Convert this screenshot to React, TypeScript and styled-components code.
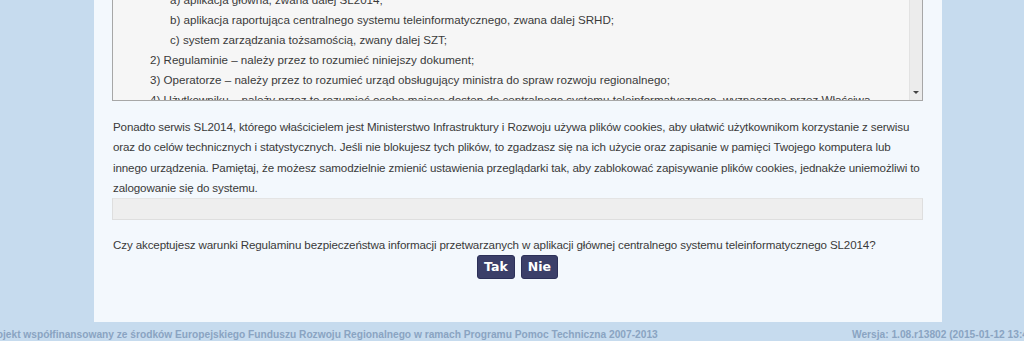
import styled, { createGlobalStyle } from 'styled-components';

const GlobalStyle = createGlobalStyle`
  html, body {
    margin: 0;
    padding: 0;
    background: #c6dbee;
    overflow: hidden;
  }
  body {
    font-family: Tahoma, "Liberation Sans", "DejaVu Sans", sans-serif;
    color: #3a3a3a;
  }
`;

const Page = styled.div`
  width: 1100px;
  margin-left: -14px;
  display: flex;
  flex-direction: column;
`;

const Panel = styled.div`
  margin: -49px 0 0 108px;
  width: 848px;
  box-sizing: border-box;
  background: #f3f8fd;
  padding: 18px 19px 43px 18px;
  display: flex;
  flex-direction: column;
`;

const ScrollBox = styled.div`
  display: flex;
  height: 130px;
  border: 1px solid #a7a7a7;
  background: #f6f6f6;
`;

const ScrollContent = styled.div`
  flex: 1;
  overflow: hidden;
  padding: 0 0 0 37px;
  font-size: 11.6px;
  line-height: 20px;
`;

const Line = styled.div<{ $level: number }>`
  white-space: nowrap;
  padding-left: ${(p) => p.$level * 20}px;
`;

const Scrollbar = styled.div`
  width: 12px;
  border-left: 1px solid #e2e2e2;
  background: #ececec;
  display: flex;
  flex-direction: column;
  justify-content: flex-end;
  align-items: center;
`;

const Arrow = styled.div`
  width: 0;
  height: 0;
  border-left: 3px solid transparent;
  border-right: 3px solid transparent;
  border-top: 3px solid #444;
  margin-bottom: 6px;
`;

const Paragraph = styled.p`
  margin: 16px 0 0 1px;
  font-size: 11.6px;
  letter-spacing: -0.13px;
  line-height: 20.4px;
`;

const Bar = styled.div`
  height: 20px;
  margin-top: -1px;
  background: #eeeeee;
  border: 1px solid #dedede;
  border-top-color: #e4e4e4;
`;

const Question = styled.p`
  margin: 15px 0 0 1px;
  font-size: 11.6px;
  letter-spacing: -0.13px;
  line-height: 20px;
`;

const Buttons = styled.div`
  display: flex;
  justify-content: center;
  gap: 6px;
`;

const Button = styled.button`
  height: 24px;
  padding: 0 6px;
  border: 1px solid #2c3058;
  border-radius: 3px;
  background: #3b3f69;
  color: #ffffff;
  font-family: Tahoma, "DejaVu Sans", sans-serif;
  font-weight: bold;
  font-size: 12.5px;
  cursor: pointer;
`;

const Footer = styled.div`
  display: flex;
  justify-content: space-between;
  padding: 6px 0 0 0;
  font-size: 10.2px;
  line-height: 13px;
  font-weight: bold;
  color: #8aa4c2;
  white-space: nowrap;
`;

const FooterRight = styled.span`
  margin-right: 49px;
`;

const lines: [number, string][] = [
  [0, '1) Systemie – należy przez to rozumieć centralny system teleinformatyczny, na który składają się:'],
  [1, 'a) aplikacja główna, zwana dalej SL2014;'],
  [1, 'b) aplikacja raportująca centralnego systemu teleinformatycznego, zwana dalej SRHD;'],
  [1, 'c) system zarządzania tożsamością, zwany dalej SZT;'],
  [0, '2) Regulaminie – należy przez to rozumieć niniejszy dokument;'],
  [0, '3) Operatorze – należy przez to rozumieć urząd obsługujący ministra do spraw rozwoju regionalnego;'],
  [0, '4) Użytkowniku – należy przez to rozumieć osobę mającą dostęp do centralnego systemu teleinformatycznego, wyznaczoną przez Właściwa'],
];

export default function App() {
  return (
    <>
      <GlobalStyle />
      <Page>
        <Panel>
          <ScrollBox>
            <ScrollContent>
              {lines.map(([level, text], i) => (
                <Line key={i} $level={level}>
                  {text}
                </Line>
              ))}
            </ScrollContent>
            <Scrollbar>
              <Arrow />
            </Scrollbar>
          </ScrollBox>
          <Paragraph>
            Ponadto serwis SL2014, którego właścicielem jest Ministerstwo Infrastruktury i Rozwoju używa plików cookies, aby ułatwić użytkownikom korzystanie z serwisu oraz do celów technicznych i statystycznych. Jeśli nie blokujesz tych plików, to zgadzasz się na ich użycie oraz zapisanie w pamięci Twojego komputera lub innego urządzenia. Pamiętaj, że możesz samodzielnie zmienić ustawienia przeglądarki tak, aby zablokować zapisywanie plików cookies, jednakże uniemożliwi to zalogowanie się do systemu.
          </Paragraph>
          <Bar />
          <Question>
            Czy akceptujesz warunki Regulaminu bezpieczeństwa informacji przetwarzanych w aplikacji głównej centralnego systemu teleinformatycznego SL2014?
          </Question>
          <Buttons>
            <Button>Tak</Button>
            <Button>Nie</Button>
          </Buttons>
        </Panel>
        <Footer>
          <span>Projekt współfinansowany ze środków Europejskiego Funduszu Rozwoju Regionalnego w ramach Programu Pomoc Techniczna 2007-2013</span>
          <FooterRight>Wersja: 1.08.r13802 (2015-01-12 13:45)</FooterRight>
        </Footer>
      </Page>
    </>
  );
}
